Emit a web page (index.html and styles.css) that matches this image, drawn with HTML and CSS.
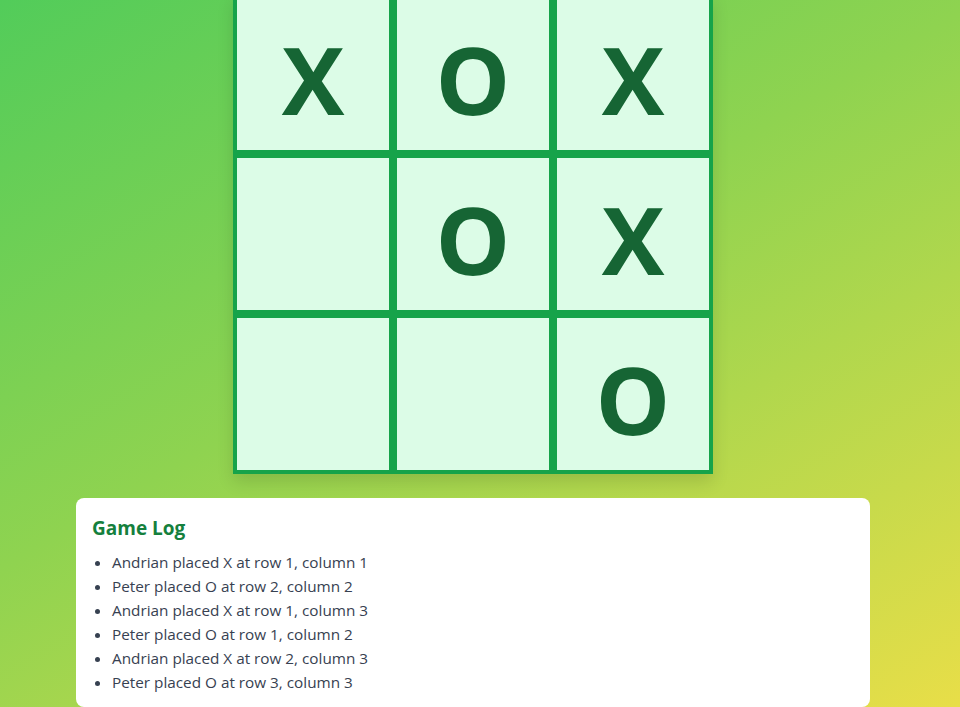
FILE: index.html
```html
<!DOCTYPE html>
<html lang="en">
<head>
<meta charset="utf-8">
<title>Tic Tac Toe</title>
<link rel="stylesheet" href="styles.css">
</head>
<body>
<main class="app">
  <div class="board">
    <div class="cell">X</div>
    <div class="cell">O</div>
    <div class="cell">X</div>
    <div class="cell"></div>
    <div class="cell">O</div>
    <div class="cell">X</div>
    <div class="cell"></div>
    <div class="cell"></div>
    <div class="cell">O</div>
  </div>
  <section class="log">
    <h2 class="log-title">Game Log</h2>
    <ul class="log-list">
      <li>Andrian placed X at row 1, column 1</li>
      <li>Peter placed O at row 2, column 2</li>
      <li>Andrian placed X at row 1, column 3</li>
      <li>Peter placed O at row 1, column 2</li>
      <li>Andrian placed X at row 2, column 3</li>
      <li>Peter placed O at row 3, column 3</li>
    </ul>
  </section>
</main>
</body>
</html>
```
FILE: styles.css
```css
html, body {
  margin: 0;
  height: 100%;
}
body {
  background: linear-gradient(150deg, #52cc5a 0%, #8fd350 45%, #e8de48 100%);
  font-family: "Open Sans", "Noto Sans", sans-serif;
  overflow: hidden;
}
.app {
  width: 946px;
  display: flex;
  flex-direction: column;
  align-items: center;
  gap: 24px;
  margin-top: -6px;
}
.board {
  display: grid;
  grid-template-columns: repeat(3, 160px);
  grid-template-rows: repeat(3, 160px);
  box-shadow: 0 8px 16px rgba(0, 0, 0, 0.12);
}
.cell {
  box-sizing: border-box;
  border: 4px solid #16a34a;
  background: #dcfce7;
  color: #166534;
  font-size: 94px;
  font-weight: 700;
  display: flex;
  align-items: center;
  justify-content: center;
  line-height: 1;
  padding-top: 10px;
}
.log {
  box-sizing: border-box;
  width: 794px;
  background: #ffffff;
  border-radius: 8px;
  padding: 16px 16px 13px;
}
.log-title {
  margin: 0 0 8px;
  font-size: 19px;
  font-weight: 700;
  color: #15803d;
  line-height: 28px;
}
.log-list {
  margin: 0;
  padding-left: 20px;
  color: #374151;
  font-size: 15.3px;
  line-height: 24px;
}
```
